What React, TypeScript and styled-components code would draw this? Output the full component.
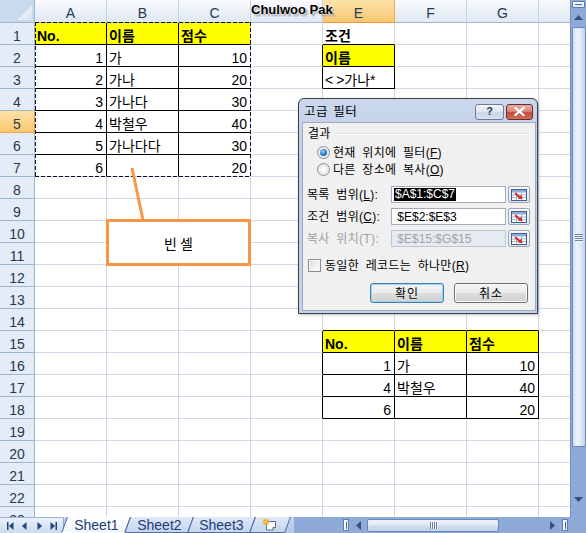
import React from 'react';
import styled, { createGlobalStyle, css } from 'styled-components';

const GlobalStyle = createGlobalStyle`
  html, body { margin: 0; padding: 0; background: #fff; }
  body { font-family: "Liberation Sans", "Noto Sans CJK KR", sans-serif; }
  * { box-sizing: border-box; }
`;

const GRID = '#d0d7e5';
const HDR_LINE = '#9eb6ce';
const Y = '#ffff00';
const K = '#000000';

const Window = styled.div`
  width: 586px;
  height: 533px;
  display: flex;
  flex-direction: column;
  overflow: hidden;
  background: #fff;
`;

const Main = styled.div`
  display: flex;
  height: 517px;
`;

const SheetArea = styled.div`
  position: relative;
  width: 570px;
  height: 517px;
  overflow: hidden;
`;

const Grid = styled.div`
  display: grid;
  grid-template-columns: 35px repeat(8, 72px);
  grid-template-rows: 23px repeat(23, 22px);
  width: 611px;
`;

const Corner = styled.div`
  background: #c9daef;
  border-right: 1px solid ${HDR_LINE};
  border-bottom: 1px solid ${HDR_LINE};
  display: flex;
  align-items: flex-end;
  justify-content: flex-end;
  padding: 0 2px 2px 0;
`;

const CornerTri = styled.div`
  width: 15px;
  height: 14px;
  background: linear-gradient(135deg, transparent 50%, #e6eef8 50%, #d6e2f2 100%);
`;

const ColHead = styled.div<{ $sel?: boolean }>`
  display: flex;
  align-items: center;
  justify-content: center;
  padding-top: 3px;
  font-size: 14px;
  line-height: 14px;
  color: #27384f;
  background: ${p => (p.$sel ? 'linear-gradient(#fde2a8, #fbd28a 60%, #f9c66f)' : 'linear-gradient(#fbfcfe, #eaf0f8 55%, #e1e9f5)')};
  border-right: 1px solid ${p => (p.$sel ? '#f2a84a' : '#c3d1e3')};
  border-bottom: 1px solid ${p => (p.$sel ? '#f29436' : HDR_LINE)};
`;

const RowHead = styled.div<{ $sel?: boolean }>`
  display: flex;
  align-items: flex-end;
  justify-content: center;
  padding-bottom: 1px;
  font-size: 14px;
  line-height: 14px;
  color: #27384f;
  background: ${p => (p.$sel ? 'linear-gradient(#fde2a8, #f9c66f)' : '#e4ecf7')};
  border-right: 1px solid ${p => (p.$sel ? '#f29436' : HDR_LINE)};
  border-bottom: 1px solid ${p => (p.$sel ? '#f2a84a' : HDR_LINE)};
`;

type Align = 'left' | 'right' | 'center';

const Cell = styled.div<{ $align?: Align; $bg?: string; $bold?: boolean; $rb?: string; $bb?: string }>`
  display: flex;
  align-items: flex-end;
  justify-content: ${p => (p.$align === 'right' ? 'flex-end' : p.$align === 'center' ? 'center' : 'flex-start')};
  padding: 0 3px 1px 2px;
  background: ${p => p.$bg ?? '#fff'};
  border-right: 1px solid ${p => p.$rb ?? GRID};
  border-bottom: 1px solid ${p => p.$bb ?? GRID};
  font-size: 14px;
  line-height: 14px;
  font-weight: ${p => (p.$bold ? 700 : 400)};
  color: #000;
  white-space: nowrap;
`;

const Spaced = styled.span`
  letter-spacing: 3px;
`;

const DASH = '#0b0b2e';

const Marquee = styled.div`
  position: absolute;
  left: 35px;
  top: 22px;
  width: 216px;
  height: 155px;
  pointer-events: none;
  background:
    repeating-linear-gradient(90deg, ${DASH} 0 4px, transparent 4px 6px) left top / 100% 1px no-repeat,
    repeating-linear-gradient(90deg, ${DASH} 0 4px, transparent 4px 6px) left bottom / 100% 1px no-repeat,
    repeating-linear-gradient(180deg, ${DASH} 0 4px, transparent 4px 6px) left top / 1px 100% no-repeat,
    repeating-linear-gradient(180deg, ${DASH} 0 4px, transparent 4px 6px) right top / 1px 100% no-repeat;
`;

const Watermark = styled.div`
  position: absolute;
  left: 251px;
  top: 3px;
  font-family: "Liberation Sans", sans-serif;
  font-weight: 700;
  font-size: 13px;
  line-height: 14px;
  color: #000;
  text-shadow: 0 0 2px #fff, 0 0 3px #fff, 2px 2px 2px #8a8a8a;
  white-space: nowrap;
`;

const Callout = styled.div`
  position: absolute;
  left: 106px;
  top: 219px;
  width: 145px;
  height: 47px;
  border: 3px solid #f79646;
  background: #fff;
  display: flex;
  align-items: center;
  justify-content: center;
  font-family: "Noto Sans CJK KR", sans-serif;
  font-size: 14px;
  line-height: 16px;
  color: #000;
`;

const CalloutLine = styled.svg`
  position: absolute;
  left: 120px;
  top: 160px;
`;

/* ---------- Dialog ---------- */

const Dialog = styled.div`
  position: absolute;
  left: 298px;
  top: 98px;
  width: 240px;
  height: 216px;
  border: 1px solid #3f3f3f;
  border-radius: 6px 6px 0 0;
  background: linear-gradient(#cad8ec, #bccde6 30%, #c3d3ea);
  padding: 0 1px 2px 3px;
  display: flex;
  flex-direction: column;
  box-shadow: 1px 1px 3px rgba(0, 0, 0, 0.25);
  font-family: "Liberation Sans", "Noto Sans CJK KR", sans-serif;
  font-size: 12px;
  color: #000;
`;

const TitleBar = styled.div`
  height: 23px;
  display: flex;
  align-items: center;
  padding-left: 2px;
`;

const Title = styled.span`
  font-family: "Noto Sans CJK KR", sans-serif;
  font-size: 12.5px;
  line-height: 14px;
  letter-spacing: 0.5px;
  word-spacing: 2px;
`;

const CapBtn = styled.div<{ $close?: boolean }>`
  height: 16px;
  width: ${p => (p.$close ? '27px' : '29px')};
  margin-left: ${p => (p.$close ? '2px' : 'auto')};
  margin-right: ${p => (p.$close ? '3px' : '0')};
  margin-top: 2px;
  border: 1px solid ${p => (p.$close ? '#6c2b25' : '#6b7c99')};
  border-radius: 3px;
  background: ${p =>
    p.$close
      ? 'linear-gradient(#e9ada3, #d9877b 45%, #c34a3b 55%, #d2705d)'
      : 'linear-gradient(#f3f6fb, #dfe7f2 45%, #c9d5e6 55%, #d7e1ee)'};
  display: flex;
  align-items: center;
  justify-content: center;
  font-family: "Liberation Sans", sans-serif;
  font-weight: 700;
  font-size: 11px;
  line-height: 11px;
  color: #2c3e60;
`;

const DBody = styled.div`
  flex: 1;
  background: #f0f0f0;
  border: 1px solid #9aabc3;
  padding: 3px 5px 0 4px;
  display: flex;
  flex-direction: column;
`;

const KText = styled.span<{ $dim?: boolean }>`
  font-family: "Liberation Sans", "Noto Sans CJK KR", sans-serif;
  font-size: 12px;
  line-height: 14px;
  word-spacing: 3px;
  letter-spacing: 0.3px;
  color: ${p => (p.$dim ? '#a0a0a0' : '#000')};
  white-space: nowrap;
`;

const U = styled.span`
  text-decoration: underline;
  text-underline-offset: 1px;
`;

const GroupHead = styled.div`
  height: 16px;
  display: flex;
  align-items: center;
  gap: 7px;
  padding-left: 1px;
`;

const GroupLine = styled.div`
  flex: 1;
  height: 2px;
  border-top: 1px solid #d5dde8;
  border-bottom: 1px solid #ffffff;
  margin-right: 2px;
`;

const RadioList = styled.div`
  margin-top: 2px;
  padding-left: 10px;
  display: flex;
  flex-direction: column;
`;

const OptRow = styled.div`
  height: 17px;
  display: flex;
  align-items: center;
  gap: 3px;
`;

const Radio = styled.span<{ $on?: boolean }>`
  flex: none;
  width: 13px;
  height: 13px;
  border-radius: 50%;
  border: 1px solid #8c8f94;
  background: radial-gradient(circle at 50% 50%, #ffffff, #d9dbde);
  display: inline-flex;
  align-items: center;
  justify-content: center;
  ${p =>
    p.$on &&
    css`
      &::after {
        content: '';
        width: 7px;
        height: 7px;
        border-radius: 50%;
        background: radial-gradient(circle at 40% 35%, #9ad8ff, #2a74c4 55%, #174e93);
      }
    `}
`;

const FieldList = styled.div`
  margin-top: 8px;
  display: flex;
  flex-direction: column;
  gap: 5px;
`;

const FieldRow = styled.div`
  height: 17px;
  display: flex;
  align-items: center;
`;

const FieldLabel = styled.div`
  width: 84px;
  display: flex;
  align-items: center;
`;

const Input = styled.div<{ $disabled?: boolean }>`
  width: 115px;
  height: 17px;
  border: 1px solid ${p => (p.$disabled ? '#b8c6d8' : '#a5acb5')};
  background: ${p => (p.$disabled ? '#e6ebf2' : '#fff')};
  display: flex;
  align-items: center;
  padding-left: 2px;
  font-family: "Liberation Sans", sans-serif;
  font-size: 12px;
  line-height: 12px;
  color: ${p => (p.$disabled ? '#a3a3a3' : '#000')};
  white-space: nowrap;
  overflow: hidden;
`;

const Selected = styled.span`
  background: #000;
  color: #fff;
  padding: 0 1px 1px 1px;
  line-height: 12px;
`;

const RefBtn = styled.div`
  width: 22px;
  height: 17px;
  margin-left: 2px;
  border: 1px solid #9aa6b6;
  border-radius: 2px;
  background: linear-gradient(#fafafa, #e3e6ea);
  display: flex;
  align-items: center;
  justify-content: center;
`;

const CheckRow = styled.div`
  margin-top: 10px;
  height: 17px;
  display: flex;
  align-items: center;
  gap: 4px;
  padding-left: 1px;
`;

const CheckBox = styled.span`
  flex: none;
  width: 13px;
  height: 13px;
  border: 1px solid #8e8f8f;
  background: linear-gradient(135deg, #d8d9db, #f7f7f7 70%, #ffffff);
  box-shadow: inset 0 0 0 1px #f4f4f4;
`;

const ButtonRow = styled.div`
  margin-top: 9px;
  display: flex;
  gap: 10px;
  padding-left: 63px;
`;

const PushBtn = styled.div<{ $default?: boolean }>`
  width: 74px;
  height: 20px;
  border: 1px solid ${p => (p.$default ? '#3c7fb1' : '#707070')};
  border-radius: 3px;
  background: linear-gradient(#f4f4f4 0%, #ececec 48%, #dddddd 52%, #d0d0d0 100%);
  box-shadow: inset 0 0 0 1px ${p => (p.$default ? '#9ed4f5' : '#fcfcfc')};
  display: flex;
  align-items: center;
  justify-content: center;
  font-family: "Noto Sans CJK KR", sans-serif;
  font-size: 12px;
  line-height: 14px;
  letter-spacing: 1px;
`;

/* ---------- Scrollbars & tabs ---------- */

const TRACK = '#8eaad8';

const VScroll = styled.div`
  width: 16px;
  height: 517px;
  background: ${TRACK};
  border-left: 1px solid #7590c0;
  display: flex;
  flex-direction: column;
  align-items: center;
`;

const SplitBoxH = styled.div`
  margin-top: 1px;
  width: 13px;
  height: 7px;
  border: 1px solid #5f7db0;
  border-radius: 1px;
  background: linear-gradient(#ffffff, #e3ebf6);
  display: flex;
  align-items: center;
  justify-content: center;
  &::after {
    content: '';
    width: 7px;
    height: 1px;
    background: #4b6594;
  }
`;

const ArrowBox = styled.div<{ $h: number; $w?: number }>`
  height: ${p => p.$h}px;
  width: ${p => (p.$w ? `${p.$w}px` : 'auto')};
  display: flex;
  align-items: center;
  justify-content: center;
  flex: none;
`;

const VThumb = styled.div`
  width: 14px;
  height: 420px;
  border: 1px solid #6a88bc;
  border-radius: 2px;
  background: linear-gradient(90deg, #d4dfef, #eef3fa 35%, #e4ebf6 60%, #c4d3ea);
  display: flex;
  flex-direction: column;
  align-items: center;
  justify-content: center;
  gap: 1px;
  flex: none;
`;

const GripH = styled.div`
  width: 8px;
  height: 1px;
  background: #6a7fa6;
  box-shadow: 0 1px 0 #f4f7fb;
`;

const Fill = styled.div`
  flex: 1;
`;

const BottomBar = styled.div`
  height: 16px;
  display: flex;
  background: ${TRACK};
`;

const NavArea = styled.div`
  width: 64px;
  flex: none;
  display: flex;
  align-items: center;
  padding-left: 3px;
  background: linear-gradient(#eaf1fa, #cbdaf0);
  border-top: 1px solid #9db4d9;
  border-right: 1px solid #8ea6cf;
`;

const NavBtn = styled.div`
  width: 14.5px;
  height: 14px;
  display: flex;
  align-items: center;
  justify-content: center;
`;

const Tabs = styled.div`
  display: flex;
  height: 16px;
  padding-left: 1px;
  padding-right: 6px;
  background: linear-gradient(#c7d7ee, #b2c8e8);
`;

const Tab = styled.div<{ $w: number; $active?: boolean }>`
  width: ${p => p.$w}px;
  height: 16px;
  transform: skewX(-20deg);
  border-left: 1px solid #4d6fa6;
  border-right: 1px solid #4d6fa6;
  border-bottom: 1px solid ${p => (p.$active ? '#ffffff' : '#4d6fa6')};
  margin-left: -1px;
  background: ${p => (p.$active ? 'linear-gradient(#ffffff, #f1f5fb)' : 'linear-gradient(#dfe9f7, #c3d5ee)')};
  position: relative;
  z-index: ${p => (p.$active ? 2 : 1)};
  display: flex;
  align-items: center;
  justify-content: center;
`;

const TabLabel = styled.span`
  transform: skewX(20deg);
  font-family: "Liberation Sans", sans-serif;
  font-size: 14px;
  line-height: 14px;
  color: #1f3b78;
  padding-top: 1px;
`;

const TabFill = styled.div`
  flex: 1;
`;

const HScroll = styled.div`
  width: 227px;
  flex: none;
  display: flex;
  align-items: center;
  background: ${TRACK};
`;

const SplitBoxV = styled.div<{ $ml: number }>`
  margin-left: ${p => p.$ml}px;
  width: 6px;
  height: 12px;
  border: 1px solid #5f7db0;
  background: linear-gradient(90deg, #ffffff, #e3ebf6);
  display: flex;
  align-items: center;
  justify-content: center;
  flex: none;
  &::after {
    content: '';
    width: 1px;
    height: 7px;
    background: #4b6594;
  }
`;

const HArrow = styled.div<{ $ml: number }>`
  margin-left: ${p => p.$ml}px;
  width: 7px;
  height: 12px;
  display: flex;
  align-items: center;
  justify-content: center;
  flex: none;
`;

const HThumb = styled.div`
  margin-left: 5px;
  width: 132px;
  height: 13px;
  border: 1px solid #6a88bc;
  border-radius: 2px;
  background: linear-gradient(#eef3fa, #e3eaf5 45%, #cfdbed 55%, #c4d3ea);
  display: flex;
  align-items: center;
  justify-content: center;
  gap: 1px;
  flex: none;
`;

const GripV = styled.div`
  width: 1px;
  height: 7px;
  background: #6a7fa6;
  box-shadow: 1px 0 0 #f4f7fb;
`;

const BCorner = styled.div`
  width: 16px;
  flex: none;
  background: ${TRACK};
`;

/* ---------- Icons ---------- */

const NAVY = '#23427a';

const ArrowSvg = ({ dir }: { dir: 'up' | 'down' | 'left' | 'right' }) => {
  const pts =
    dir === 'up'
      ? '0,5 4.5,0 9,5'
      : dir === 'down'
      ? '0,0 4.5,5 9,0'
      : dir === 'left'
      ? '5,0 0,4.5 5,9'
      : '0,0 5,4.5 0,9';
  const w = dir === 'up' || dir === 'down' ? 9 : 5;
  const h = dir === 'up' || dir === 'down' ? 5 : 9;
  return (
    <svg width={w} height={h} viewBox={`0 0 ${w} ${h}`}>
      <polygon points={pts} fill="#34507f" />
    </svg>
  );
};

const NavIcon = ({ kind }: { kind: 'first' | 'prev' | 'next' | 'last' }) => (
  <svg width="7" height="8" viewBox="0 0 7 8">
    {kind === 'first' && (
      <>
        <rect x="0" y="0" width="1.5" height="8" fill={NAVY} />
        <polygon points="6.5,0 2,4 6.5,8" fill={NAVY} />
      </>
    )}
    {kind === 'prev' && <polygon points="5.5,0 1,4 5.5,8" fill={NAVY} />}
    {kind === 'next' && <polygon points="1.5,0 6,4 1.5,8" fill={NAVY} />}
    {kind === 'last' && (
      <>
        <polygon points="0.5,0 5,4 0.5,8" fill={NAVY} />
        <rect x="5.5" y="0" width="1.5" height="8" fill={NAVY} />
      </>
    )}
  </svg>
);

const RefIcon = () => (
  <svg width="16" height="12" viewBox="0 0 16 12">
    <rect x="0.5" y="0.5" width="15" height="11" fill="#ffffff" stroke="#3d5f97" />
    <rect x="1" y="1" width="14" height="2.5" fill="#8eaad6" />
    <line x1="1" y1="6" x2="15" y2="6" stroke="#9fb3d3" />
    <line x1="1" y1="8.5" x2="15" y2="8.5" stroke="#9fb3d3" />
    <line x1="5.5" y1="1" x2="5.5" y2="11" stroke="#9fb3d3" />
    <line x1="10.5" y1="1" x2="10.5" y2="11" stroke="#9fb3d3" />
    <path d="M4 4.2 L9 8.2" stroke="#d42a1e" strokeWidth="2" />
    <polygon points="7,9.8 11.5,10 10.3,5.6" fill="#d42a1e" />
  </svg>
);

const CloseX = () => (
  <svg width="11" height="9" viewBox="0 0 11 9">
    <path d="M1.5 1 L9.5 8 M9.5 1 L1.5 8" stroke="#ffffff" strokeWidth="2.2" strokeLinecap="square" />
  </svg>
);

const InsertSheetIcon = () => (
  <svg width="16" height="13" viewBox="0 0 16 13">
    <path d="M4.5 3.5 H13.5 V9.5 L11 12 H4.5 Z" fill="#ffffff" stroke="#5b6f92" />
    <path d="M11 12 V9.5 H13.5" fill="#dde5f1" stroke="#5b6f92" />
    <g stroke="#f0a020" strokeWidth="1.2">
      <line x1="4" y1="0.5" x2="4" y2="7.5" />
      <line x1="0.5" y1="4" x2="7.5" y2="4" />
      <line x1="1.5" y1="1.5" x2="6.5" y2="6.5" />
      <line x1="6.5" y1="1.5" x2="1.5" y2="6.5" />
    </g>
    <circle cx="4" cy="4" r="1.8" fill="#ffc830" />
  </svg>
);

/* ---------- Data ---------- */

type CellDef = { t?: React.ReactNode; align?: Align; bold?: boolean; bg?: string; rb?: string; bb?: string };

const COLS = ['A', 'B', 'C', 'D', 'E', 'F', 'G', 'H'];
/* D is hidden under the watermark and H under the scrollbar in the reference */
const HEAD_LABEL: Record<string, string> = { D: '', H: '' };
const ROWS = Array.from({ length: 23 }, (_, i) => i + 1);

const data: Record<string, CellDef> = {
  A1: { t: 'No.', bold: true, bg: Y, rb: K, bb: K },
  B1: { t: '이름', bold: true, bg: Y, rb: K, bb: K },
  C1: { t: '점수', bold: true, bg: Y, bb: K },
  E1: { t: '조건', bold: true, bb: K },
  D2: { rb: K },
  D3: { rb: K },
  E2: { t: '이름', bold: true, bg: Y, rb: K, bb: K },
  E3: {
    t: (
      <>
        <Spaced>&lt;</Spaced>&gt;가나*
      </>
    ),
    rb: K,
    bb: K,
  },
  E14: { bb: K },
  F14: { bb: K },
  G14: { bb: K },
  E15: { t: 'No.', bold: true, bg: Y, rb: K, bb: K },
  F15: { t: '이름', bold: true, bg: Y, rb: K, bb: K },
  G15: { t: '점수', bold: true, bg: Y, rb: K, bb: K },
};

const table1: [string, string, string][] = [
  ['1', '가', '10'],
  ['2', '가나', '20'],
  ['3', '가나다', '30'],
  ['4', '박철우', '40'],
  ['5', '가나다다', '30'],
  ['6', '', '20'],
];
table1.forEach(([n, name, score], i) => {
  const r = i + 2;
  const bb = r < 7 ? K : undefined;
  data[`A${r}`] = { t: n, align: 'right', rb: K, bb };
  data[`B${r}`] = { t: name, rb: K, bb };
  data[`C${r}`] = { t: score, align: 'right', bb };
});

const table2: [string, string, string][] = [
  ['1', '가', '10'],
  ['4', '박철우', '40'],
  ['6', '', '20'],
];
table2.forEach(([n, name, score], i) => {
  const r = i + 16;
  data[`E${r}`] = { t: n, align: 'right', rb: K, bb: K };
  data[`F${r}`] = { t: name, rb: K, bb: K };
  data[`G${r}`] = { t: score, align: 'right', rb: K, bb: K };
});
[15, 16, 17, 18].forEach(r => {
  data[`D${r}`] = { rb: K };
});

const SEL_COL = 'E';
const SEL_ROW = 5;

export default function App() {
  return (
    <>
      <GlobalStyle />
      <Window>
        <Main>
          <SheetArea>
            <Grid>
              <Corner>
                <CornerTri />
              </Corner>
              {COLS.map(c => (
                <ColHead key={c} $sel={c === SEL_COL}>
                  {HEAD_LABEL[c] ?? c}
                </ColHead>
              ))}
              {ROWS.map(r => (
                <React.Fragment key={r}>
                  <RowHead $sel={r === SEL_ROW}>{r}</RowHead>
                  {COLS.map(c => {
                    const d = data[`${c}${r}`] ?? {};
                    return (
                      <Cell key={c} $align={d.align} $bg={d.bg} $bold={d.bold} $rb={d.rb} $bb={d.bb}>
                        {d.t}
                      </Cell>
                    );
                  })}
                </React.Fragment>
              ))}
            </Grid>

            <Marquee />
            <Watermark>Chulwoo Pak</Watermark>

            <CalloutLine width="40" height="62" viewBox="0 0 40 62">
              <line x1="12" y1="8" x2="23" y2="60" stroke="#f79646" strokeWidth="3" />
            </CalloutLine>
            <Callout>빈 셀</Callout>

            <Dialog>
              <TitleBar>
                <Title>고급 필터</Title>
                <CapBtn>?</CapBtn>
                <CapBtn $close>
                  <CloseX />
                </CapBtn>
              </TitleBar>
              <DBody>
                <GroupHead>
                  <KText>결과</KText>
                  <GroupLine />
                </GroupHead>
                <RadioList>
                  <OptRow>
                    <Radio $on />
                    <KText>
                      현재 위치에 필터(<U>F</U>)
                    </KText>
                  </OptRow>
                  <OptRow>
                    <Radio />
                    <KText>
                      다른 장소에 복사(<U>O</U>)
                    </KText>
                  </OptRow>
                </RadioList>
                <FieldList>
                  <FieldRow>
                    <FieldLabel>
                      <KText>
                        목록 범위(<U>L</U>):
                      </KText>
                    </FieldLabel>
                    <Input>
                      <Selected>$A$1:$C$7</Selected>
                    </Input>
                    <RefBtn>
                      <RefIcon />
                    </RefBtn>
                  </FieldRow>
                  <FieldRow>
                    <FieldLabel>
                      <KText>
                        조건 범위(<U>C</U>):
                      </KText>
                    </FieldLabel>
                    <Input>&nbsp;$E$2:$E$3</Input>
                    <RefBtn>
                      <RefIcon />
                    </RefBtn>
                  </FieldRow>
                  <FieldRow>
                    <FieldLabel>
                      <KText $dim>복사 위치(T):</KText>
                    </FieldLabel>
                    <Input $disabled>&nbsp;$E$15:$G$15</Input>
                    <RefBtn>
                      <RefIcon />
                    </RefBtn>
                  </FieldRow>
                </FieldList>
                <CheckRow>
                  <CheckBox />
                  <KText>
                    동일한 레코드는 하나만(<U>R</U>)
                  </KText>
                </CheckRow>
                <ButtonRow>
                  <PushBtn $default>확인</PushBtn>
                  <PushBtn>취소</PushBtn>
                </ButtonRow>
              </DBody>
            </Dialog>
          </SheetArea>

          <VScroll>
            <SplitBoxH />
            <ArrowBox $h={19}>
              <ArrowSvg dir="up" />
            </ArrowBox>
            <VThumb>
              <GripH />
              <GripH />
              <GripH />
              <GripH />
            </VThumb>
            <Fill />
            <ArrowBox $h={20}>
              <ArrowSvg dir="down" />
            </ArrowBox>
            <ArrowBox $h={8} />
          </VScroll>
        </Main>

        <BottomBar>
          <NavArea>
            <NavBtn>
              <NavIcon kind="first" />
            </NavBtn>
            <NavBtn>
              <NavIcon kind="prev" />
            </NavBtn>
            <NavBtn>
              <NavIcon kind="next" />
            </NavBtn>
            <NavBtn>
              <NavIcon kind="last" />
            </NavBtn>
          </NavArea>
          <Tabs>
            <Tab $w={64} $active>
              <TabLabel>Sheet1</TabLabel>
            </Tab>
            <Tab $w={64}>
              <TabLabel>Sheet2</TabLabel>
            </Tab>
            <Tab $w={63}>
              <TabLabel>Sheet3</TabLabel>
            </Tab>
            <Tab $w={36}>
              <TabLabel>
                <InsertSheetIcon />
              </TabLabel>
            </Tab>
          </Tabs>
          <TabFill />
          <HScroll>
            <SplitBoxV $ml={0} />
            <HArrow $ml={6}>
              <ArrowSvg dir="left" />
            </HArrow>
            <HThumb>
              <GripV />
              <GripV />
              <GripV />
              <GripV />
            </HThumb>
            <Fill />
            <HArrow $ml={0}>
              <ArrowSvg dir="right" />
            </HArrow>
            <SplitBoxV $ml={6} />
            <ArrowBox $h={12} $w={2} />
          </HScroll>
          <BCorner />
        </BottomBar>
      </Window>
    </>
  );
}
